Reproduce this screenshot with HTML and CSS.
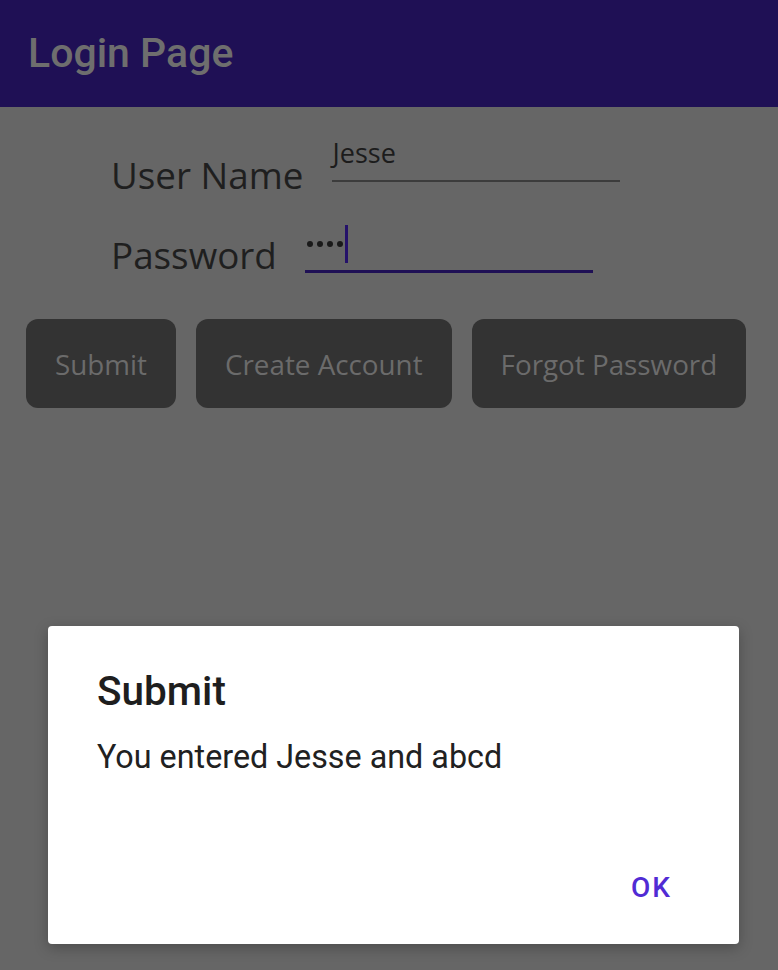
FILE: index.html
```html
<!DOCTYPE html>
<html lang="en">
<head>
<meta charset="utf-8">
<title>Login Page</title>
<link rel="stylesheet" href="styles.css">
</head>
<body>
<div class="app">
  <header class="toolbar">
    <h1 class="toolbar-title">Login Page</h1>
  </header>
  <main class="content">
    <div class="form">
      <div class="row row-user">
        <label class="label label-user">User Name</label>
        <div class="field field-user"><span class="field-text">Jesse</span></div>
      </div>
      <div class="row row-pass">
        <label class="label label-pass">Password</label>
        <div class="field field-pass">
          <span class="dots"><i class="dot"></i><i class="dot"></i><i class="dot"></i><i class="dot"></i></span>
          <span class="cursor"></span>
        </div>
      </div>
    </div>
    <div class="actions">
      <button class="btn">Submit</button>
      <button class="btn">Create Account</button>
      <button class="btn">Forgot Password</button>
    </div>
  </main>
  <div class="overlay">
    <div class="dialog">
      <h2 class="dialog-title">Submit</h2>
      <p class="dialog-message">You entered Jesse and abcd</p>
      <div class="dialog-actions">
        <button class="dialog-btn">OK</button>
      </div>
    </div>
  </div>
</div>
</body>
</html>
```

FILE: styles.css
```css
* { box-sizing: border-box; }
html, body { margin: 0; padding: 0; }
body {
  width: 778px;
  height: 970px;
  background: #666666;
  overflow: hidden;
  font-family: "Open Sans", "Liberation Sans", sans-serif;
}
.app {
  position: relative;
  width: 778px;
  height: 970px;
}
.toolbar {
  height: 107px;
  background: #1f1055;
  display: flex;
  align-items: center;
  padding-left: 28px;
}
.toolbar-title {
  margin: 0;
  font-family: Roboto, "Liberation Sans", sans-serif;
  font-weight: 500;
  font-size: 41px;
  line-height: 48px;
  color: #6e6e6e;
  padding-bottom: 2px;
}
.content {
  display: flex;
  flex-direction: column;
}
.form {
  padding-left: 111px;
  padding-top: 30px;
  display: flex;
  flex-direction: column;
}
.row {
  display: flex;
  align-items: flex-start;
}
.row-pass { margin-top: 28px; }
.label {
  font-size: 36.8px;
  line-height: 44px;
  color: #1f1f1f;
}
.label-user { margin-top: 16px; margin-right: 28px; }
.label-pass { margin-top: 8px; margin-right: 28px; }
.field {
  width: 288px;
  display: flex;
  align-items: center;
}
.field-user {
  border-bottom: 2px solid #3c3c3c;
  padding-bottom: 11px;
  padding-left: 1px;
}
.field-text {
  font-size: 27px;
  line-height: 32px;
  color: #1c1c1c;
}
.field-pass {
  height: 48px;
  border-bottom: 3px solid #1f1055;
  align-items: flex-start;
  padding-left: 2px;
}
.dots {
  display: flex;
  gap: 4px;
  margin-top: 16px;
}
.dot {
  width: 6px;
  height: 6px;
  border-radius: 50%;
  background: #1a1a1a;
}
.cursor {
  width: 3px;
  height: 38px;
  background: #25126a;
  margin-left: 2px;
}
.actions {
  display: flex;
  gap: 20px;
  padding-left: 26px;
  margin-top: 42px;
}
.btn {
  height: 89px;
  padding: 0 29px;
  border: none;
  border-radius: 12px;
  background: #333333;
  color: #6b6b6b;
  font-family: "Open Sans", "Liberation Sans", sans-serif;
  font-size: 27.8px;
  line-height: 36px;
}
.overlay {
  position: absolute;
  inset: 0;
  display: flex;
  align-items: flex-end;
  padding: 0 39px 26px 48px;
}
.dialog {
  width: 691px;
  height: 318px;
  background: #ffffff;
  border-radius: 4px;
  box-shadow: 0 4px 14px rgba(0, 0, 0, 0.25);
  display: flex;
  flex-direction: column;
  padding: 41px 0 39px 49px;
  font-family: Roboto, "Liberation Sans", sans-serif;
}
.dialog-title {
  margin: 0;
  font-size: 40.5px;
  font-weight: 500;
  line-height: 48px;
  color: #1e1e1e;
}
.dialog-message {
  margin: 22px 0 0 0;
  font-size: 32.3px;
  line-height: 40px;
  color: #212121;
}
.dialog-actions {
  margin-top: auto;
  display: flex;
  justify-content: flex-end;
  padding-right: 67px;
}
.dialog-btn {
  border: none;
  background: none;
  padding: 0;
  font-family: Roboto, "Liberation Sans", sans-serif;
  font-weight: 500;
  font-size: 28px;
  line-height: 34px;
  letter-spacing: 2px;
  color: #512bd4;
}
```
